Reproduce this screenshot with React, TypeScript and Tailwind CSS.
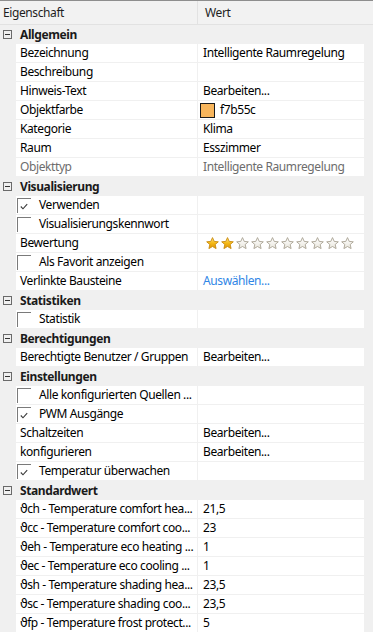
import React from "react";

type Row =
  | { k: "cat"; t: string }
  | { k: "txt"; n: string; v?: string; muted?: boolean; link?: boolean; sym?: boolean }
  | { k: "chk"; n: string; c: boolean }
  | { k: "color"; n: string; v: string }
  | { k: "stars"; n: string; s: number };

const rows: Row[] = [
  { k: "cat", t: "Allgemein" },
  { k: "txt", n: "Bezeichnung", v: "Intelligente Raumregelung" },
  { k: "txt", n: "Beschreibung", v: "" },
  { k: "txt", n: "Hinweis-Text", v: "Bearbeiten..." },
  { k: "color", n: "Objektfarbe", v: "f7b55c" },
  { k: "txt", n: "Kategorie", v: "Klima" },
  { k: "txt", n: "Raum", v: "Esszimmer" },
  { k: "txt", n: "Objekttyp", v: "Intelligente Raumregelung", muted: true },
  { k: "cat", t: "Visualisierung" },
  { k: "chk", n: "Verwenden", c: true },
  { k: "chk", n: "Visualisierungskennwort", c: false },
  { k: "stars", n: "Bewertung", s: 2 },
  { k: "chk", n: "Als Favorit anzeigen", c: false },
  { k: "txt", n: "Verlinkte Bausteine", v: "Auswählen...", link: true },
  { k: "cat", t: "Statistiken" },
  { k: "chk", n: "Statistik", c: false },
  { k: "cat", t: "Berechtigungen" },
  { k: "txt", n: "Berechtigte Benutzer / Gruppen", v: "Bearbeiten..." },
  { k: "cat", t: "Einstellungen" },
  { k: "chk", n: "Alle konfigurierten Quellen ...", c: false },
  { k: "chk", n: "PWM Ausgänge", c: true },
  { k: "txt", n: "Schaltzeiten", v: "Bearbeiten..." },
  { k: "txt", n: "konfigurieren", v: "Bearbeiten..." },
  { k: "chk", n: "Temperatur überwachen", c: true },
  { k: "cat", t: "Standardwert" },
  { k: "txt", sym: true, n: "ch - Temperature comfort hea...", v: "21,5" },
  { k: "txt", sym: true, n: "cc - Temperature comfort coo...", v: "23" },
  { k: "txt", sym: true, n: "eh - Temperature eco heating ...", v: "1" },
  { k: "txt", sym: true, n: "ec - Temperature eco cooling ...", v: "1" },
  { k: "txt", sym: true, n: "sh - Temperature shading hea...", v: "23,5" },
  { k: "txt", sym: true, n: "sc - Temperature shading coo...", v: "23,5" },
  { k: "txt", sym: true, n: "fp - Temperature frost protect...", v: "5" },
];

const STAR = "M6.5 0.6 L8.2 4.4 L12.3 4.8 L9.2 7.5 L10.1 11.6 L6.5 9.5 L2.9 11.6 L3.8 7.5 L0.7 4.8 L4.8 4.4 Z";

function Star({ on, id }: { on: boolean; id: string }) {
  return (
    <svg width="13" height="12" viewBox="0 0 13 12">
      <defs>
        <linearGradient id={id} x1="0" y1="0" x2="0" y2="1">
          {on ? (
            <>
              <stop offset="0" stopColor="#fde68a" />
              <stop offset="0.5" stopColor="#f5b915" />
              <stop offset="1" stopColor="#d9920a" />
            </>
          ) : (
            <>
              <stop offset="0" stopColor="#ffffff" />
              <stop offset="1" stopColor="#e9e6dc" />
            </>
          )}
        </linearGradient>
      </defs>
      <path d={STAR} fill={`url(#${id})`} stroke={on ? "#c98a0c" : "#a8a292"} strokeWidth="0.9" strokeLinejoin="round" />
    </svg>
  );
}

function Check({ c }: { c: boolean }) {
  return (
    <div className="relative w-[14px] h-[15px] shrink-0 border-l border-t border-[#7a7a7a] bg-white">
      {c && (
        <svg className="absolute left-[2px] top-[4px]" width="8" height="7" viewBox="0 0 8 7">
          <polyline points="0.8,3.5 3,5.8 7.2,1.2" fill="none" stroke="#3a3a3a" strokeWidth="1.1" />
        </svg>
      )}
    </div>
  );
}

function Value({ r }: { r: Row }) {
  if (r.k === "txt")
    return (
      <span className={r.muted ? "text-[#6d6d6d]" : r.link ? "text-[#2f86e6]" : "text-black"}>{r.v}</span>
    );
  if (r.k === "color")
    return (
      <div className="flex items-center gap-[5px] -ml-[3px]">
        <div className="w-[15px] h-[15px] bg-[#f7b55c] border border-[#1a1a1a]" />
        <span className="text-black">{r.v}</span>
      </div>
    );
  if (r.k === "stars")
    return (
      <div className="flex gap-[2px] ml-[3px]">
        {Array.from({ length: 10 }).map((_, i) => (
          <Star key={i} on={i < r.s} id={`st${i}`} />
        ))}
      </div>
    );
  return null;
}

export default function App() {
  return (
    <div
      className="w-[373px] h-[632px] overflow-hidden bg-[#f0f0f0] text-[12px] leading-[18px] tracking-[-0.4px] text-black"
      style={{ fontFamily: '"Noto Sans", "DejaVu Sans", sans-serif' }}
    >
      <div className="h-[25px] flex border-t border-[#8e8e8e] border-b border-b-[#e2e2e2] bg-[#f2f2f2] text-[#1e1e1e]">
        <div className="w-[197px] pl-[3px] flex items-center">Eigenschaft</div>
        <div className="flex-1 pl-[7px] flex items-center border-l border-[#e2e2e2]">Wert</div>
      </div>
      {rows.map((r, i) =>
        r.k === "cat" ? (
          <div key={i} className="h-[19px] flex items-center">
            <div className="ml-[3px] w-[9px] h-[9px] border border-[#6a6a6a] flex items-center justify-center">
              <div className="w-[5px] h-[1px] bg-[#333]" />
            </div>
            <span className="ml-[8px] font-bold text-[#1a1a1a]">{r.t}</span>
          </div>
        ) : (
          <div key={i} className="h-[19px] flex">
            <div className="ml-[16px] w-[181px] h-[18px] bg-white flex items-center overflow-hidden whitespace-nowrap">
              {r.k === "chk" ? (
                <div className="flex items-center">
                  <div className="ml-[1px]">
                    <Check c={r.c} />
                  </div>
                  <span className="ml-[8px]">{r.n}</span>
                </div>
              ) : (
                <span className={`pl-[4px] ${r.k === "txt" && r.muted ? "text-[#6d6d6d]" : ""}`}>
                  {r.k === "txt" && r.sym && (
                    <span style={{ fontFamily: '"DejaVu Sans", sans-serif' }} className="text-[12.5px] tracking-[-0.6px]">
                      ϑ
                    </span>
                  )}
                  {r.n}
                </span>
              )}
            </div>
            <div className="ml-[1px] w-[166px] h-[18px] bg-white flex items-center pl-[5px] whitespace-nowrap overflow-hidden">
              <Value r={r} />
            </div>
          </div>
        )
      )}
    </div>
  );
}
